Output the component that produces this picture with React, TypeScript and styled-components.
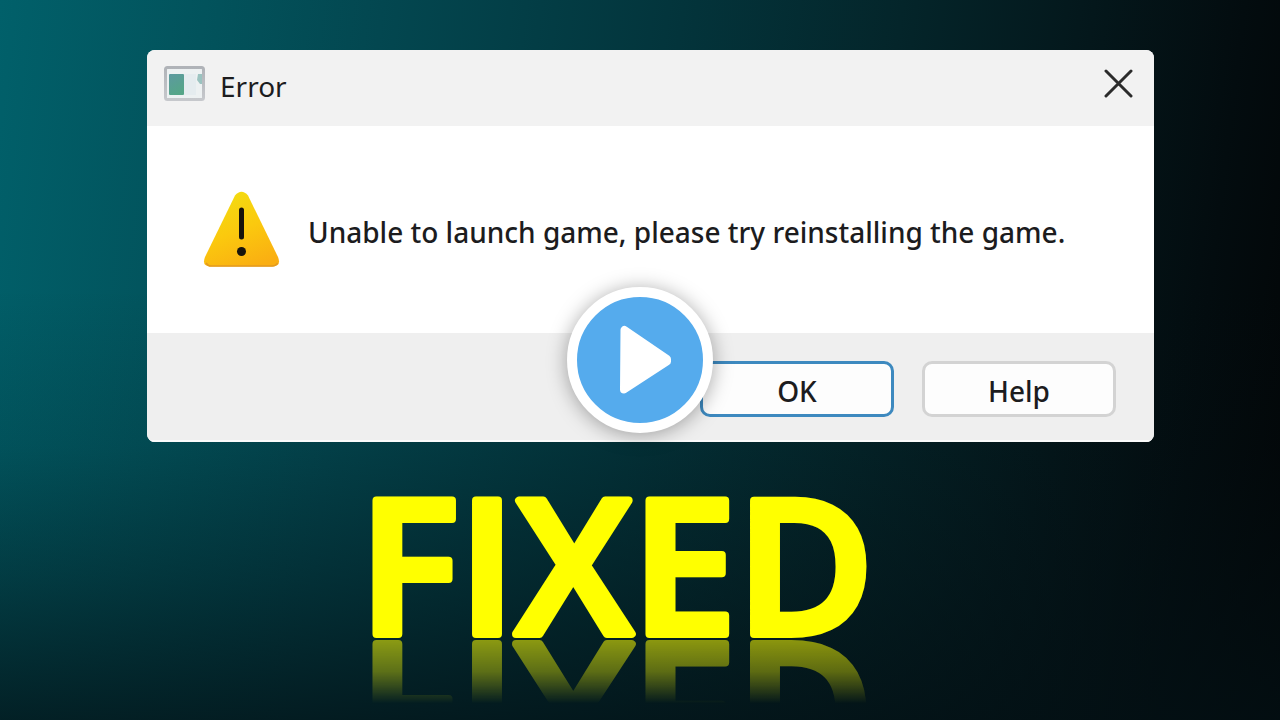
import React from "react";
import styled, { createGlobalStyle } from "styled-components";

const GlobalStyle = createGlobalStyle`
  * { box-sizing: border-box; }
  body { margin: 0; background: #02080c; }
`;

const Stage = styled.main`
  position: relative;
  display: flex;
  flex-direction: column;
  min-height: 100vh;
  padding: 50px 126px 0 147px;
  overflow: hidden;
  font-family: "Noto Sans", "Open Sans", sans-serif;
  color: #1c1c1e;
  background:
    linear-gradient(
      to bottom,
      rgba(3, 16, 20, 0) 40%,
      rgba(3, 16, 20, 0.14) 62%,
      rgba(3, 16, 20, 0.42) 80%,
      rgba(3, 16, 20, 0.78) 100%
    ),
    linear-gradient(
      97deg,
      #01606a 0%,
      #02535c 15%,
      #034750 28%,
      #03343b 50%,
      #04252a 66%,
      #04171b 80%,
      #030c0f 91%,
      #030506 100%
    );
`;

const Dialog = styled.section`
  display: flex;
  flex-direction: column;
  border-radius: 8px;
  overflow: hidden;
  background: #ffffff;
`;

const TitleBar = styled.header`
  display: flex;
  align-items: center;
  gap: 14px;
  padding: 0 20px 8px 17px;
  min-height: 76px;
  background: #f2f2f2;
`;

const Title = styled.h1`
  flex: 1;
  margin: 0;
  padding-top: 4px;
  font-size: 28px;
  line-height: 36px;
  font-weight: 400;
`;

const CloseButton = styled.button`
  display: flex;
  padding: 0;
  border: 0;
  background: none;
  color: #2b2b2b;
`;

const Body = styled.div`
  display: flex;
  align-items: center;
  gap: 28px;
  min-height: 207px;
  padding: 0 56px;
`;

const Message = styled.p`
  margin: 0;
  padding-top: 4px;
  font-size: 28px;
  line-height: 36px;
  font-weight: 500;
`;

const Footer = styled.footer`
  display: flex;
  justify-content: flex-end;
  gap: 28px;
  padding: 28px 38px 23px;
  border-bottom: 2px solid #fbfbfb;
  background: #efefef;
`;

const DialogButton = styled.button<{ $primary?: boolean }>`
  width: 194px;
  height: 56px;
  padding: 4px 0 0;
  border: 3px solid ${(p) => (p.$primary ? "#3d89bf" : "#d3d3d3")};
  border-radius: 10px;
  background: #fdfdfd;
  color: inherit;
  font-family: inherit;
  font-size: 28px;
  line-height: 36px;
  font-weight: 500;
`;

const PlayButton = styled.button`
  position: absolute;
  top: 360px;
  left: 50%;
  transform: translate(-50%, -50%);
  width: 146px;
  height: 146px;
  padding: 0;
  border: 10px solid #ffffff;
  border-radius: 50%;
  background: #55abed;
  box-shadow: 0 2px 20px rgba(0, 0, 0, 0.35);

  svg { display: block; }
`;

const Headline = styled.h2`
  align-self: center;
  margin: 50px 64px 0 0;
  -webkit-box-reflect: below 0
    linear-gradient(transparent 56%, rgba(255, 255, 255, 0.36) 78%, rgba(255, 255, 255, 0.55) 100%);

  svg { display: block; overflow: visible; }

  text {
    font-family: "Open Sans", sans-serif;
    font-size: 187px;
    font-weight: 600;
    fill: #ffff00;
    stroke: #ffff00;
    stroke-width: 8px;
    stroke-linejoin: round;
  }
`;

const WindowIcon = () => (
  <svg width="42" height="36" viewBox="0 0 42 36" aria-hidden="true">
    <defs>
      <linearGradient id="pane" x1="0" y1="0" x2="0.4" y2="1">
        <stop offset="0" stopColor="#5d9aa0" />
        <stop offset="1" stopColor="#55a588" />
      </linearGradient>
      <linearGradient id="frame" x1="0" y1="0" x2="0" y2="1">
        <stop offset="0" stopColor="#b0b3b8" />
        <stop offset="1" stopColor="#c6c8cc" />
      </linearGradient>
    </defs>
    <rect x="1.500" y="1.500" width="38" height="32" rx="2" fill="#edf1f2" stroke="url(#frame)" strokeWidth="3" />
    <rect x="5" y="8" width="15" height="21" rx="1" fill="url(#pane)" />
    <rect x="20" y="8" width="12" height="21" fill="#e5ecef" />
    <path d="M34 8h4v10h-2l-3-4z" fill="#9bc3c0" />
  </svg>
);

const WarningIcon = () => (
  <svg width="77" height="77" viewBox="0 0 77 77" aria-hidden="true">
    <defs>
      <linearGradient id="warn" x1="0.3" y1="0" x2="0.7" y2="1">
        <stop offset="0" stopColor="#f3dc10" />
        <stop offset="0.5" stopColor="#fbc90e" />
        <stop offset="1" stopColor="#faae12" />
      </linearGradient>
    </defs>
    <path
      d="M32 4.500Q38.500 -3 45 4.500L75 66Q78.500 75 70 75.500H7Q-1.500 75 2 66Z"
      fill="url(#warn)"
    />
    <path d="M3 72Q5 75 8 75H69Q73 75 74.500 72" fill="none" stroke="#e39a20" strokeWidth="1.500" />
    <path d="M38.500 19V46" stroke="#16130c" strokeWidth="5" strokeLinecap="round" />
    <circle cx="38.500" cy="60.500" r="4.500" fill="#16130c" />
  </svg>
);

export default function App() {
  return (
    <>
      <GlobalStyle />
      <Stage>
        <Dialog role="dialog" aria-labelledby="dialog-title">
          <TitleBar>
            <WindowIcon />
            <Title id="dialog-title">Error</Title>
            <CloseButton type="button" aria-label="Close">
              <svg width="30" height="30" viewBox="0 0 30 30" aria-hidden="true">
                <path d="M2 2 27 27M27 2 2 27" stroke="currentColor" strokeWidth="3" strokeLinecap="round" />
              </svg>
            </CloseButton>
          </TitleBar>
          <Body>
            <WarningIcon />
            <Message>Unable to launch game, please try reinstalling the game.</Message>
          </Body>
          <Footer>
            <DialogButton type="button" $primary>OK</DialogButton>
            <DialogButton type="button">Help</DialogButton>
          </Footer>
        </Dialog>
        <Headline>
          <svg width="520" height="147" viewBox="0 0 520 147">
            <text x="0" y="142">FIXED</text>
          </svg>
        </Headline>
        <PlayButton type="button" aria-label="Play video">
          <svg width="126" height="126" viewBox="0 0 126 126" aria-hidden="true">
            <path d="M47.500 33 47 92.500 90 64.500V62Z" fill="#fff" stroke="#fff" strokeWidth="8" strokeLinejoin="round" />
          </svg>
        </PlayButton>
      </Stage>
    </>
  );
}
